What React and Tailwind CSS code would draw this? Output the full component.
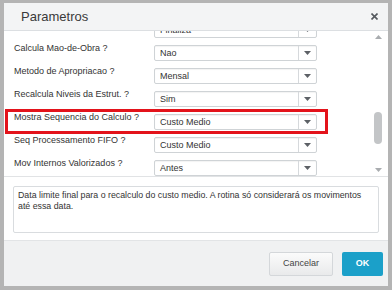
import React from 'react';

const rows = [
  { label: '', value: 'Finaliza' },
  { label: 'Calcula Mao-de-Obra ?', value: 'Nao' },
  { label: 'Metodo de Apropriacao ?', value: 'Mensal' },
  { label: 'Recalcula Niveis da Estrut. ?', value: 'Sim' },
  { label: 'Mostra Sequencia do Calculo ?', value: 'Custo Medio' },
  { label: 'Seq Processamento FIFO ?', value: 'Custo Medio' },
  { label: 'Mov Internos Valorizados ?', value: 'Antes' },
];

const Select = ({ value }) => (
  <div className="w-[163px] h-[16px] bg-white border border-[#cfd3d6] rounded-[2px] flex items-center shadow-[inset_0_1px_1px_rgba(0,0,0,0.05)]">
    <div className="flex-1 pl-[5px] text-[9px] text-[#333] leading-none truncate">{value}</div>
    <div className="w-[18px] h-full border-l border-[#d6d9dc] flex items-center justify-center">
      <svg width="7" height="4" viewBox="0 0 7 4">
        <path d="M0 0 L7 0 L3.5 4 Z" fill="#5d6166" />
      </svg>
    </div>
  </div>
);

const Row = ({ label, value }) => (
  <div className="h-[23px] flex items-start shrink-0">
    <div className="w-[150px] pl-[10px] text-[9px] text-[#333] leading-[12px] -mt-[3px]">{label}</div>
    <Select value={value} />
  </div>
);

const App = () => {
  return (
    <div
      className="w-[392px] h-[290px] bg-[#b4b4b4] pt-[3px] px-[4px] pb-[4px]"
      style={{ fontFamily: '"Liberation Sans", Arial, sans-serif' }}
    >
      <div className="h-full bg-white flex flex-col">
        {/* header */}
        <div className="h-[28px] shrink-0 bg-[#f3f4f5] border-b border-[#dcdfe2] flex items-center justify-between pl-[17px] pr-[10px]">
          <span className="text-[13px] text-[#3a3a3a]">Parametros</span>
          <svg width="7" height="7" viewBox="0 0 7 7">
            <path d="M0.5 0.5 L6.5 6.5 M6.5 0.5 L0.5 6.5" stroke="#55595e" strokeWidth="1.6" />
          </svg>
        </div>

        {/* form */}
        <div className="h-[146px] shrink-0 relative overflow-hidden border-b border-[#e1e3e5] flex">
          <div className="flex-1 flex flex-col -mt-[9px]">
            {rows.map((r, i) => (
              <Row key={i} label={r.label} value={r.value} />
            ))}
          </div>
          <div className="w-[16px] shrink-0 flex flex-col items-center pt-[4px] pb-[4px] pr-[4px]">
            <svg width="7" height="4" viewBox="0 0 7 4">
              <path d="M3.5 0 L7 4 L0 4 Z" fill="#a9acaf" />
            </svg>
            <div className="flex-1 w-full flex flex-col items-center">
              <div className="h-[73px]" />
              <div className="w-[8px] h-[32px] bg-[#c3c5c7] rounded-[4px]" />
            </div>
            <svg width="7" height="4" viewBox="0 0 7 4">
              <path d="M0 0 L7 0 L3.5 4 Z" fill="#a9acaf" />
            </svg>
          </div>

          {/* highlight */}
          <div className="absolute left-[1px] top-[78px] w-[323px] h-[25px] border-[3px] border-[#e3131b]" />
        </div>

        {/* description */}
        <div className="flex-1 px-[9px] pt-[9px]">
          <div className="h-[47px] border border-[#d9dcdf] rounded-[2px] px-[4px] pt-[3px] text-[8.8px] leading-[11px] text-[#333]">
            Data limite final para o recalculo do custo medio. A rotina só considerará os movimentos até essa data.
          </div>
        </div>

        {/* footer */}
        <div className="h-[46px] shrink-0 bg-[#f0f1f2] border-t border-[#e2e4e6] flex items-center justify-end gap-[9px] pr-[5px] pt-[1px]">
          <button className="w-[64px] h-[24px] rounded-[2px] border border-[#d4d7da] bg-gradient-to-b from-[#fbfbfb] to-[#e9eaeb] text-[9px] text-[#444]">
            Cancelar
          </button>
          <button className="w-[41px] h-[24px] rounded-[2px] bg-[#1ba0c9] text-[9px] font-bold text-white">
            OK
          </button>
        </div>
      </div>
    </div>
  );
};

export default App;
